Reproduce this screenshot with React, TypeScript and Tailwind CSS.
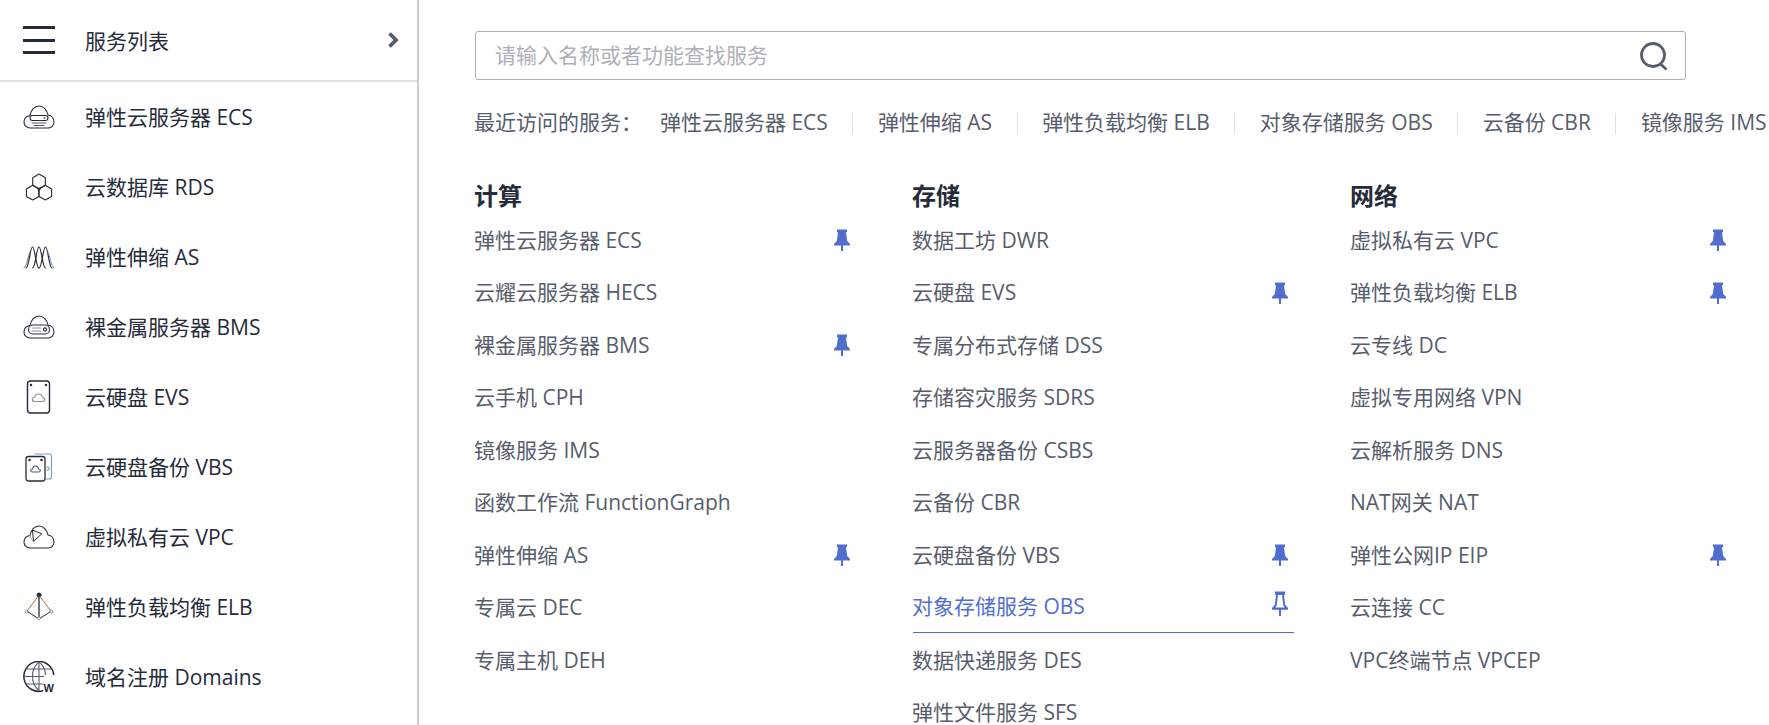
import React from "react";

const FONT = "font-['Open_Sans','Noto_Sans_CJK_SC',sans-serif]";

const S = { fill: "none", stroke: "#252b3a", strokeWidth: 1.1, strokeLinejoin: "round" as const, strokeLinecap: "round" as const };

function Cloud({ children }: { children?: React.ReactNode }) {
  return (
    <svg width="33" height="24" viewBox="0 0 32 24" {...S}>
      <path d="M7 23C3.500 23 1 20.300 1 17 1 13.500 3.500 11 7 10.500 8 5 11.500 1 16 1c4.500 0 8 4 9 9 3.500.5 6 3.500 6 7 0 3.300-2.500 6-5.500 6Z" />
      {children}
    </svg>
  );
}

function Icon({ name }: { name: string }) {
  switch (name) {
    case "ecs":
      return (
        <Cloud>
          <rect x="7" y="10.500" width="18" height="5" rx="2.500" />
          <circle cx="21.500" cy="13" r="1" fill="#b0503c" stroke="none" />
          <path d="M9 18h14M11 20.500h10" stroke="#575d6c" />
        </Cloud>
      );
    case "bms":
      return (
        <Cloud>
          <rect x="5.500" y="10" width="21" height="9" rx="4.500" />
          <circle cx="22" cy="14.500" r="1.600" />
          <path d="M9.500 13h8M9.500 16h8" stroke="#8a8e99" />
        </Cloud>
      );
    case "rds":
      return (
        <svg width="28" height="28" viewBox="0 0 28 28" {...S}>
          <path d="M14 1l6.300 3.700v7.600L14 16l-6.300-3.700V4.700Z" />
          <path d="M7.700 12.300L14 16v7.600L7.700 27l-6.300-3.400V16Z" />
          <path d="M20.300 12.300L26.600 16v7.600L20.300 27 14 23.600V16Z" />
          <circle cx="14" cy="16" r="1" fill="#252b3a" />
        </svg>
      );
    case "as":
      return (
        <svg width="32" height="24" viewBox="0 0 32 24" fill="none" strokeWidth={1.200} strokeLinecap="round">
          <path d="M1 23C4 22 5 10 7 7" stroke="#8a7a70" strokeWidth="1" />
          <path d="M3 23C6 23 7 2 9.500 2S13 23 16 23" stroke="#252b3a" />
          <path d="M9.500 23C12.500 23 13.500 2 16 2S19.500 23 22.500 23" stroke="#252b3a" />
          <path d="M16 23C19 23 20 2 22.500 2S26 23 29 23" stroke="#252b3a" />
          <path d="M25 7C27 10 28 22 31 23" stroke="#6f93c8" strokeWidth="1" />
        </svg>
      );
    case "evs":
      return (
        <svg width="26" height="34" viewBox="0 0 26 34" {...S}>
          <rect x="1.500" y="1" width="22" height="32" rx="3" strokeWidth="1.400" />
          <circle cx="5" cy="5" r=".7" fill="#252b3a" />
          <circle cx="20" cy="5" r=".7" fill="#252b3a" />
          <path d="M8.500 21.500c-3 0-3-4 0-4 .5-2.500 2-3.500 4-3.500s3.600 1.200 4 3.500c3 .2 3 4 0 4Z" stroke="#8a8e99" />
        </svg>
      );
    case "vbs":
      return (
        <svg width="28" height="30" viewBox="0 0 28 30" {...S}>
          <path d="M10 2h14.500a2 2 0 0 1 2 2v21a2 2 0 0 1-2 2H21" stroke="#6c9ad8" />
          <path d="M22 15a1.600 1.600 0 1 1 0 3" stroke="#8a8e99" />
          <rect x="1" y="4.500" width="19" height="24.500" rx="2.500" strokeWidth="1.300" />
          <circle cx="4.500" cy="8" r=".7" fill="#252b3a" />
          <circle cx="16.500" cy="8" r=".7" fill="#252b3a" />
          <path d="M7.500 20c-2.500 0-2.500-3 0-3 .4-2 1.500-3 3-3s2.600 1 3 3c2.500 0 2.500 3 0 3Z" stroke="#575d6c" />
        </svg>
      );
    case "vpc":
      return (
        <Cloud>
          <path d="M9.500 5.500L10.500 16.500 18.500 9Z" strokeWidth="1" />
          <path d="M7 10.500C8 13 8.500 15 10.500 16.500" stroke="#8a8e99" strokeWidth=".8" />
        </Cloud>
      );
    case "elb":
      return (
        <svg width="30" height="30" viewBox="0 0 30 30" {...S} strokeWidth={1}>
          <circle cx="15" cy="3" r="2" fill="#252b3a" />
          <path d="M15 3v22" strokeWidth="1.300" />
          <path d="M14 4.500L3.500 18.500M16 4.500l10.500 14" stroke="#b0703c" />
          <path d="M4 20l9.500 6M26 20l-9.500 6" />
          <circle cx="2.800" cy="19.500" r="1.500" stroke="#8a8e99" />
          <circle cx="27.200" cy="19.500" r="1.500" stroke="#8a8e99" />
          <path d="M15 24.500l1.800 1.800-1.800 1.800-1.800-1.800Z" stroke="#8a8e99" />
        </svg>
      );
    case "domain":
      return (
        <svg width="32" height="32" viewBox="0 0 32 32" fill="none" stroke="#252b3a" strokeWidth="1.100">
          <path d="M20 29.800A15 15 0 1 1 30.800 14" strokeWidth="1.500" />
          <path d="M16 1c-4.500 3.500-6.500 8.500-6.500 14s2 11 6.500 14.500M16 1c4.500 3.500 6.500 8.500 6.500 13" stroke="#575d6c" />
          <path d="M16 1v29M1 15.500h20M3.500 8h25M3.500 23h17" stroke="#575d6c" />
          <text x="20.500" y="31" fontSize="11" fontWeight="700" fill="#252b3a" stroke="none" fontFamily="'Liberation Sans',sans-serif">W</text>
        </svg>
      );
    default:
      return null;
  }
}

function PinSolid() {
  return (
    <svg width="16" height="22" viewBox="0 0 16 22" fill="#526ecc">
      <path d="M3 0.500h10v2.500l-1 .5 1.200 8.500 2.800 3v1.500H9v5.500H7V16.500H0V15l2.800-3L4 3.500 3 3Z" />
    </svg>
  );
}

function PinOutline() {
  return (
    <svg width="16" height="25" viewBox="0 0 16 22" preserveAspectRatio="none" fill="#526ecc" className="-mt-[6px]">
      <path fillRule="evenodd" d="M3 0.500h10v2.500l-1 .5 1.200 8.500 2.800 3v1.500H9v5.500H7V16.500H0V15l2.800-3L4 3.500 3 3ZM6 3.500 4.700 13l-1.500 1.500h9.600L11.300 13 10 3.500Z" />
    </svg>
  );
}

const side = [
  ["ecs", "弹性云服务器 ECS"],
  ["rds", "云数据库 RDS"],
  ["as", "弹性伸缩 AS"],
  ["bms", "裸金属服务器 BMS"],
  ["evs", "云硬盘 EVS"],
  ["vbs", "云硬盘备份 VBS"],
  ["vpc", "虚拟私有云 VPC"],
  ["elb", "弹性负载均衡 ELB"],
  ["domain", "域名注册 Domains"],
];

const recent = ["弹性云服务器 ECS", "弹性伸缩 AS", "弹性负载均衡 ELB", "对象存储服务 OBS", "云备份 CBR", "镜像服务 IMS"];

type Item = [string, boolean?, boolean?];
const cols: { title: string; items: Item[] }[] = [
  {
    title: "计算",
    items: [["弹性云服务器 ECS", true], ["云耀云服务器 HECS"], ["裸金属服务器 BMS", true], ["云手机 CPH"], ["镜像服务 IMS"], ["函数工作流 FunctionGraph"], ["弹性伸缩 AS", true], ["专属云 DEC"], ["专属主机 DEH"]],
  },
  {
    title: "存储",
    items: [["数据工坊 DWR"], ["云硬盘 EVS", true], ["专属分布式存储 DSS"], ["存储容灾服务 SDRS"], ["云服务器备份 CSBS"], ["云备份 CBR"], ["云硬盘备份 VBS", true], ["对象存储服务 OBS", false, true], ["数据快递服务 DES"], ["弹性文件服务 SFS"]],
  },
  {
    title: "网络",
    items: [["虚拟私有云 VPC", true], ["弹性负载均衡 ELB", true], ["云专线 DC"], ["虚拟专用网络 VPN"], ["云解析服务 DNS"], ["NAT网关 NAT"], ["弹性公网IP EIP", true], ["云连接 CC"], ["VPC终端节点 VPCEP"]],
  },
];

export default function App() {
  return (
    <div className={`${FONT} flex h-[725px] w-[1769px] overflow-hidden bg-white text-[21px]`}>
      <aside className="h-full w-[419px] shrink-0 border-r-2 border-[#cccccc] text-[#252b3a]">
        <div className="flex h-[82px] items-center border-b-2 border-[#dfe1e6] pl-[23px] pr-[18px]">
          <div className="flex h-[28px] w-[32px] flex-col justify-between">
            <div className="h-[3px] bg-[#252b3a]" />
            <div className="h-[3px] bg-[#252b3a]" />
            <div className="h-[3px] bg-[#252b3a]" />
          </div>
          <span className="ml-[30px] flex-1 pt-[3px]">服务列表</span>
          <svg width="12" height="16" viewBox="0 0 12 16" fill="none" stroke="#575d6c" strokeWidth="3.800">
            <path d="M2.500 1.500L9 8l-6.500 6.500" />
          </svg>
        </div>
        {side.map(([icon, label]) => (
          <div key={label} className="flex h-[70px] items-center pl-[23px]">
            <div className="flex w-[32px] justify-center">
              <Icon name={icon} />
            </div>
            <span className="ml-[30px] whitespace-nowrap pt-[2px]">{label}</span>
          </div>
        ))}
      </aside>
      <main className="min-w-0 flex-1 pl-[56px] pt-[31px] text-[#575d6c]">
        <div className="flex h-[49px] w-[1211px] items-center rounded-[3px] border border-[#adb0b8] pl-[19px] pr-[16px]">
          <span className="flex-1 text-[#adb0b8]">请输入名称或者功能查找服务</span>
          <svg width="30" height="30" viewBox="0 0 30 30" fill="none" stroke="#575d6c" strokeWidth="2.800">
            <circle cx="14" cy="14" r="11.500" />
            <path d="M21.500 23l6 5.500" />
          </svg>
        </div>
        <div className="mt-[28px] flex h-[30px] items-center whitespace-nowrap">
          <span className="w-[186px] shrink-0 -ml-px">最近访问的服务：</span>
          {recent.map((r, i) => (
            <React.Fragment key={r}>
              {i > 0 && <span className="mx-[24.500px] h-[21px] w-px shrink-0 bg-[#dfe1e6]" />}
              <span>{r}</span>
            </React.Fragment>
          ))}
        </div>
        <div className="mt-[40px] flex">
          {cols.map((c) => (
            <div key={c.title} className="w-[438px] shrink-0">
              <h2 className="-ml-px flex h-[36px] items-center text-[24px] font-bold text-[#252b3a]">{c.title}</h2>
              <ul className="w-[381px]">
                {c.items.map(([t, pin, active]) => (
                  <li
                    key={t}
                    className={`flex items-center justify-between pr-[6px] ${active ? "mb-[1px] h-[51.500px] border-b border-[#526ecc] text-[#526ecc]" : "h-[52.500px]"}`}
                  >
                    <span className="-ml-px">{t}</span>
                    {pin ? <PinSolid /> : active ? <PinOutline /> : null}
                  </li>
                ))}
              </ul>
            </div>
          ))}
        </div>
      </main>
    </div>
  );
}
